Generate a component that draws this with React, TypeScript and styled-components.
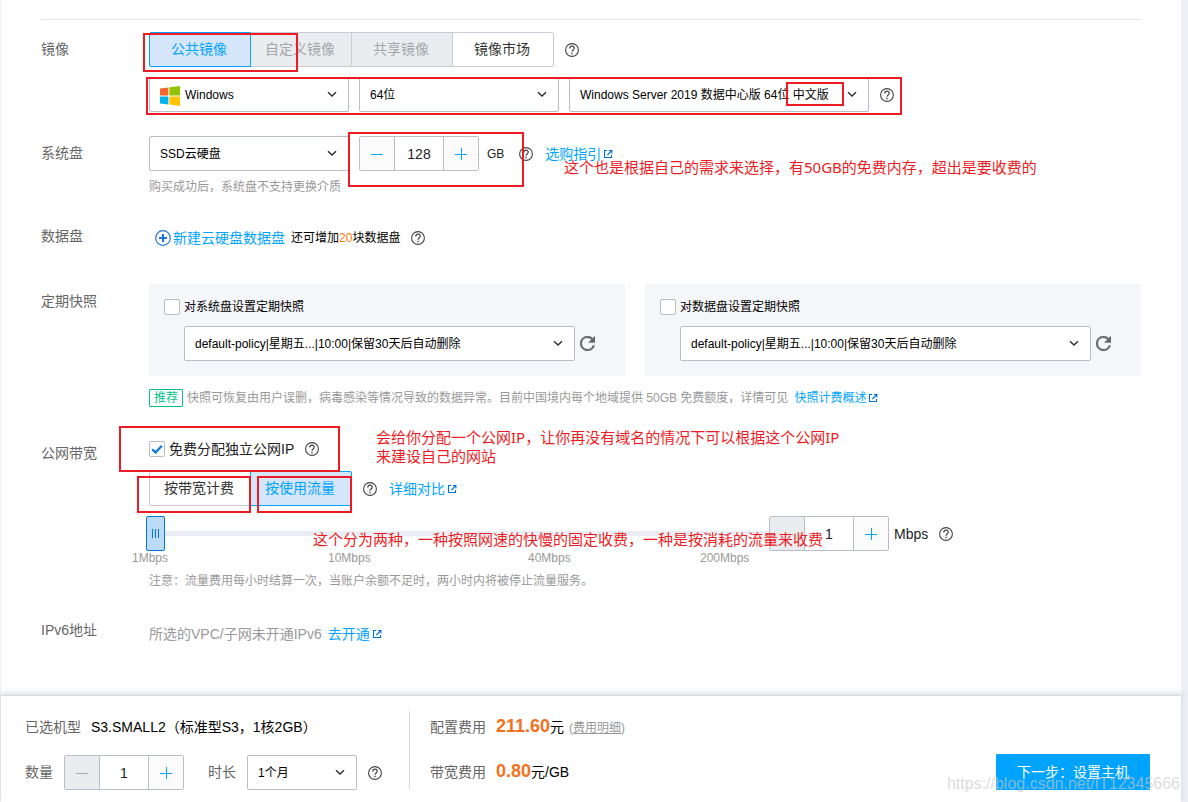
import React, { useId, useState } from "react";
import styled, { createGlobalStyle, css } from "styled-components";

const BLUE = "#00a4ff";
const BORDER = "#b9bdc8";
const DISABLED = "#eaedf0";
const RED = "#ed1c24";

const GlobalStyle = createGlobalStyle`
  * { box-sizing: border-box; }
  body {
    margin: 0;
    background: #eff0f6;
    color: #000;
    font: 14px/20px "Liberation Sans", "Noto Sans CJK SC", sans-serif;
  }
  button, input, select { font-family: inherit; margin: 0; }
  svg { display: block; flex: none; }
`;

/* ---------- page ---------- */

const Page = styled.div`
  position: relative;
  min-height: 100vh;
  padding: 0 7px 0 1px;
  display: flex;
  flex-direction: column;
  overflow: hidden;
`;

const Main = styled.main`
  flex: 1;
  padding: 19px 40px 40px;
  background: #fff;
`;

const Rule = styled.hr`
  margin: 0 0 12px;
  border: 0;
  border-top: 1px solid #e5e5e5;
`;

const Row = styled.section<{ $gap?: number }>`
  display: grid;
  grid-template-columns: 108px 1fr;
  margin-top: ${(p) => p.$gap ?? 24}px;
`;

const RowLabel = styled.h2`
  margin: 0;
  font-size: 14px;
  font-weight: 400;
  line-height: 35px;
  color: #666;
`;

const Line = styled.div<{ $top?: number; $height?: number }>`
  display: flex;
  align-items: center;
  margin-top: ${(p) => p.$top ?? 0}px;
  height: ${(p) => p.$height ?? 35}px;
  white-space: nowrap;
`;

const Hint = styled.p`
  margin: 8px 0 0;
  font-size: 12px;
  line-height: 16px;
  color: #999;
`;

const Small = styled.span<{ $gap?: number }>`
  margin-left: ${(p) => p.$gap ?? 0}px;
  font-size: 12px;
`;

const Muted = styled.span`
  color: #999;
`;

const Orange = styled.span`
  color: #ff7800;
`;

/* ---------- controls ---------- */

const Tabs = styled.div`
  display: flex;
`;

const Tab = styled.button<{ $active?: boolean }>`
  width: 102px;
  height: 35px;
  padding: 0 2px 3px 0;
  border: 1px solid ${(p) => (p.$active ? BLUE : "#c8ccd6")};
  background: ${(p) => (p.$active ? "#d5e6fa" : "#fff")};
  color: ${(p) => (p.$active ? BLUE : "#333")};
  font-size: 14px;
  position: relative;
  z-index: ${(p) => (p.$active ? 1 : 0)};
  & + & { margin-left: -1px; }
  &:first-child { border-radius: 2px 0 0 2px; }
  &:last-child { border-radius: 0 2px 2px 0; }
  &:disabled {
    background: ${DISABLED};
    color: #a3a5a8;
  }
`;

const SelectWrap = styled.div<{ $width?: number; $icon?: boolean }>`
  position: relative;
  ${(p) => (p.$width ? css`width: ${p.$width}px;` : css`flex: 1;`)}
  & + & { margin-left: 10px; }
  select {
    appearance: none;
    width: 100%;
    height: 35px;
    padding: 0 28px 0 ${(p) => (p.$icon ? 35 : 10)}px;
    border: 1px solid ${BORDER};
    border-radius: 2px;
    background: #fff;
    color: #000;
    font-size: 12px;
    display: block;
  }
`;

const Chevron = styled.svg`
  position: absolute;
  right: 11px;
  top: 11px;
  pointer-events: none;
`;

const SelectIcon = styled.span`
  position: absolute;
  left: 11px;
  top: 9px;
  pointer-events: none;
`;

const StepperBox = styled.div<{ $left?: number }>`
  display: flex;
  width: 120px;
  height: 35px;
  margin-left: ${(p) => p.$left ?? 0}px;
  border: 1px solid ${BORDER};
  border-radius: 2px;
  background: #fff;
  input {
    flex: 1;
    min-width: 0;
    border: solid ${BORDER};
    border-width: 0 1px;
    padding: 0;
    background: #fff;
    color: #222;
    font-size: 14px;
    text-align: center;
  }
`;

const StepButton = styled.button`
  width: 34px;
  padding: 0;
  border: 0;
  background: #fbfbfc;
  color: ${BLUE};
  display: grid;
  place-items: center;
  &:disabled {
    background: ${DISABLED};
    color: #aaa;
  }
`;

const Unit = styled.span<{ $size: number; $gap: number }>`
  margin-left: ${(p) => p.$gap}px;
  font-size: ${(p) => p.$size}px;
  color: #222;
`;

const HelpButton = styled.button<{ $gap?: number }>`
  margin: 0 0 0 ${(p) => p.$gap ?? 11}px;
  padding: 0;
  border: 0;
  background: none;
  color: #444;
`;

const IconButton = styled(HelpButton)`
  margin-left: 5px;
  color: #666;
`;

const Link = styled.a<{ $gap?: number; $small?: boolean }>`
  display: inline-flex;
  align-items: center;
  gap: 2px;
  margin-left: ${(p) => p.$gap ?? 12}px;
  color: ${BLUE};
  font-size: ${(p) => (p.$small ? 12 : 14)}px;
  text-decoration: none;
`;

const CheckLabel = styled.label<{ $small?: boolean }>`
  display: flex;
  align-items: center;
  gap: 4px;
  font-size: ${(p) => (p.$small ? 12 : 14)}px;
  color: ${(p) => (p.$small ? "#000" : "#222")};
`;

const CheckBox = styled.span`
  position: relative;
  width: 16px;
  height: 16px;
  input {
    appearance: none;
    display: block;
    width: 16px;
    height: 16px;
    border: 1px solid #b9bdc8;
    border-radius: 2px;
    background: #fff;
  }
  svg {
    position: absolute;
    inset: 0;
    pointer-events: none;
  }
`;

/* ---------- snapshot cards ---------- */

const Cards = styled.div`
  display: grid;
  grid-template-columns: calc(50% - 20px) 1fr;
  gap: 20px;
`;

const Card = styled.div`
  padding: 14px 30px 15px 15px;
  background: #f5f6fa;
`;

const CardSelect = styled.div`
  display: flex;
  align-items: center;
  margin-top: 10px;
  padding-left: 20px;
`;

const Badge = styled.span`
  margin-right: 4px;
  padding: 0 4px;
  border: 1px solid #0abf8e;
  border-radius: 1px;
  color: #0abf8e;
  font-size: 12px;
  line-height: 16px;
`;

/* ---------- slider ---------- */

const Range = styled.input`
  appearance: none;
  width: 623px;
  height: 35px;
  margin-left: -3px;
  background: linear-gradient(#ebedf5, #ebedf5) 0 15px / 100% 5px no-repeat;
  &::-webkit-slider-thumb {
    appearance: none;
    width: 19px;
    height: 35px;
    border: 1px solid #0078e0;
    border-radius: 2px;
    background:
      linear-gradient(#0078e0, #0078e0) 5px 12px / 1px 9px no-repeat,
      linear-gradient(#0078e0, #0078e0) 8px 12px / 1px 9px no-repeat,
      linear-gradient(#0078e0, #0078e0) 11px 12px / 1px 9px no-repeat,
      #badaf6;
  }
`;

const Ticks = styled.div`
  display: grid;
  grid-template-columns: 196px 200px 172px auto;
  margin-left: -17px;
  color: #999;
  font-size: 12px;
  line-height: 14px;
`;

/* ---------- footer ---------- */

const Footer = styled.footer`
  display: flex;
  padding: 15px 31px 12px 24px;
  border-top: 1px solid #d5dde3;
  background: #fff;
  box-shadow: 0 -2px 6px rgba(120, 140, 170, 0.3);
`;

const Summary = styled.div<{ $divided?: boolean }>`
  display: grid;
  grid-template-rows: 33px 35px;
  gap: 11px;
  ${(p) =>
    p.$divided
      ? css`
          padding-left: 20px;
          border-left: 1px solid #ddd;
        `
      : css`
          width: 384px;
        `}
`;

const FootLabel = styled.span<{ $after?: number; $before?: number }>`
  margin-left: ${(p) => p.$before ?? 0}px;
  margin-right: ${(p) => p.$after ?? 10}px;
  padding-bottom: 2px;
  color: #666;
`;

const Cost = styled.span`
  padding-bottom: 2px;
`;

const Price = styled.strong`
  color: #f5701d;
  font-size: 18px;
`;

const Detail = styled.span`
  margin-left: 5px;
  font-size: 12px;
  color: #999;
  a { color: inherit; }
`;

const Submit = styled.button`
  align-self: flex-end;
  width: 154px;
  height: 36px;
  margin-left: auto;
  padding: 0 0 3px;
  border: 0;
  border-radius: 1px;
  background: ${BLUE};
  color: #fff;
  font-size: 14px;
`;

/* ---------- annotations over the page ---------- */

const Mark = styled.div<{ $x: number; $y: number; $w: number; $h: number }>`
  position: absolute;
  z-index: 2;
  left: ${(p) => p.$x}px;
  top: ${(p) => p.$y}px;
  width: ${(p) => p.$w}px;
  height: ${(p) => p.$h}px;
  border: 2px solid ${RED};
  pointer-events: none;
`;

const Note = styled.p<{ $x: number; $y: number }>`
  position: absolute;
  z-index: 2;
  left: ${(p) => p.$x}px;
  top: ${(p) => p.$y}px;
  margin: 0;
  color: ${RED};
  font: 15px/19px "Noto Sans", "Noto Sans CJK SC", sans-serif;
  white-space: nowrap;
  pointer-events: none;
`;

const Watermark = styled.span`
  position: absolute;
  z-index: 3;
  right: 8px;
  bottom: 8px;
  font-size: 16px;
  color: rgba(200, 200, 200, 0.65);
  pointer-events: none;
`;

/* ---------- icons ---------- */

const Help = ({ gap }: { gap?: number }) => (
  <HelpButton aria-label="帮助" $gap={gap}>
    <svg width="14" height="14" viewBox="0 0 14 14" fill="none" stroke="currentColor">
      <circle cx="7" cy="7" r="6.4" strokeWidth="1.1" />
      <path d="M4.8 5.4C4.8 4 5.7 3.2 7 3.2s2.2.8 2.2 2c0 1.7-2.2 1.8-2.2 3.6" strokeWidth="1.2" />
      <path d="M7 9.8v1.4" strokeWidth="1.3" />
    </svg>
  </HelpButton>
);

const External = () => (
  <svg width="10" height="10" viewBox="0 0 10 10" fill="none" stroke="#0071d8" strokeWidth="1.1">
    <path d="M4 1.5H1.5v7h7V6M6 1.5h2.9v2.9M8.7 1.6 4.4 6" />
  </svg>
);

const Refresh = () => (
  <IconButton aria-label="刷新">
    <svg width="15" height="15" viewBox="4 4 16 16" fill="currentColor" stroke="currentColor" strokeWidth="0.4">
      <path d="M17.65 6.35A7.96 7.96 0 0 0 12 4a8 8 0 1 0 7.73 10h-2.08A6 6 0 1 1 12 6c1.66 0 3.14.69 4.22 1.78L13 11h7V4z" />
    </svg>
  </IconButton>
);

const CirclePlus = () => (
  <svg width="16" height="16" viewBox="0 0 16 16" fill="none" stroke="#1a73d9">
    <circle cx="8" cy="8" r="7.3" strokeWidth="1.2" />
    <path d="M4 8h8M8 4v8" strokeWidth="2" />
  </svg>
);

const WindowsLogo = () => (
  <svg width="20" height="20" viewBox="0 0 20 20">
    <path fill="#f8682c" d="M0 2.6 8.4 1.4v8H0z" />
    <path fill="#91c300" d="M9.4 1.2 20 0v9.4H9.4z" />
    <path fill="#00b4f1" d="M0 10.4h8.4v8L0 17.4z" />
    <path fill="#ffc300" d="M9.4 10.4H20V20L9.4 18.6z" />
  </svg>
);

const Minus = () => (
  <svg width="12" height="12" viewBox="0 0 12 12" stroke="currentColor">
    <path d="M0 6.5h12" />
  </svg>
);

const Plus = () => (
  <svg width="12" height="12" viewBox="0 0 12 12" stroke="currentColor">
    <path d="M0 6.5h12M6.5 0v12" />
  </svg>
);

/* ---------- composed controls ---------- */

function Select({ label, value, width, icon }: { label: string; value: string; width?: number; icon?: React.ReactNode }) {
  return (
    <SelectWrap $width={width} $icon={!!icon}>
      <select aria-label={label} defaultValue={value}>
        <option>{value}</option>
      </select>
      {icon && <SelectIcon>{icon}</SelectIcon>}
      <Chevron width="12" height="12" viewBox="0 0 12 12" fill="none" stroke="#333" strokeWidth="1.5">
        <path d="M2 4.2 6 8l4-3.8" />
      </Chevron>
    </SelectWrap>
  );
}

function Stepper({ label, start, min, left }: { label: string; start: number; min: number; left?: number }) {
  const [value, setValue] = useState(start);
  return (
    <StepperBox $left={left}>
      <StepButton aria-label="减少" disabled={value <= min} onClick={() => setValue(value - 1)}>
        <Minus />
      </StepButton>
      <input aria-label={label} value={value} onChange={(e) => setValue(Number(e.target.value) || min)} />
      <StepButton aria-label="增加" onClick={() => setValue(value + 1)}>
        <Plus />
      </StepButton>
    </StepperBox>
  );
}

function Check({ text, small, initial = false }: { text: string; small?: boolean; initial?: boolean }) {
  const id = useId();
  const [on, setOn] = useState(initial);
  return (
    <CheckLabel htmlFor={id} $small={small}>
      <CheckBox>
        <input id={id} type="checkbox" checked={on} onChange={() => setOn(!on)} />
        {on && (
          <svg width="16" height="16" viewBox="0 0 16 16" fill="none" stroke="#0078e0" strokeWidth="2.2">
            <path d="M3.2 8.2 6.6 11.4 12.8 4.8" />
          </svg>
        )}
      </CheckBox>
      {text}
    </CheckLabel>
  );
}

function SnapshotCard({ title }: { title: string }) {
  return (
    <Card>
      <Line $height={18}>
        <Check small text={title} />
      </Line>
      <CardSelect>
        <Select label={title} value="default-policy|星期五...|10:00|保留30天后自动删除" />
        <Refresh />
      </CardSelect>
    </Card>
  );
}

const marks = [
  [143, 33, 155, 39],
  [146, 77, 756, 38],
  [786, 82, 58, 24],
  [348, 132, 176, 55],
  [119, 426, 221, 46],
  [137, 476, 114, 37],
  [257, 476, 95, 37],
];

export default function App() {
  return (
    <Page>
      <GlobalStyle />
      <Main>
        <Rule />
        <Row $gap={0}>
          <RowLabel>镜像</RowLabel>
          <div>
            <Line>
              <Tabs>
                <Tab $active>公共镜像</Tab>
                <Tab disabled>自定义镜像</Tab>
                <Tab disabled>共享镜像</Tab>
                <Tab>镜像市场</Tab>
              </Tabs>
              <Help />
            </Line>
            <Line $top={10}>
              <Select label="操作系统" value="Windows" width={200} icon={<WindowsLogo />} />
              <Select label="位数" value="64位" width={200} />
              <Select label="镜像版本" value="Windows Server 2019 数据中心版 64位 中文版" width={300} />
              <Help />
            </Line>
          </div>
        </Row>

        <Row>
          <RowLabel>系统盘</RowLabel>
          <div>
            <Line>
              <Select label="系统盘类型" value="SSD云硬盘" width={200} />
              <Stepper label="系统盘容量" start={128} min={50} left={10} />
              <Unit $size={12} $gap={8}>GB</Unit>
              <Help gap={15} />
              <Link href="#guide">选购指引<External /></Link>
            </Line>
            <Hint>购买成功后，系统盘不支持更换介质</Hint>
          </div>
        </Row>

        <Row>
          <RowLabel>数据盘</RowLabel>
          <Line $height={38}>
            <Link href="#add-disk" $gap={6}><CirclePlus />新建云硬盘数据盘</Link>
            <Small $gap={6}>还可增加<Orange>20</Orange>块数据盘</Small>
            <Help />
          </Line>
        </Row>

        <Row $gap={27}>
          <RowLabel>定期快照</RowLabel>
          <div>
            <Cards>
              <SnapshotCard title="对系统盘设置定期快照" />
              <SnapshotCard title="对数据盘设置定期快照" />
            </Cards>
            <Line $top={13} $height={18}>
              <Badge>推荐</Badge>
              <Small>
                <Muted>快照可恢复由用户误删，病毒感染等情况导致的数据异常。目前中国境内每个地域提供 50GB 免费额度，详情可见</Muted>
              </Small>
              <Link href="#snapshot-price" $small $gap={6}>快照计费概述<External /></Link>
            </Line>
          </div>
        </Row>

        <Row $gap={29}>
          <RowLabel>公网带宽</RowLabel>
          <div>
            <Line $height={26}>
              <Check initial text="免费分配独立公网IP" />
              <Help />
            </Line>
            <Line $top={9}>
              <Tabs>
                <Tab>按带宽计费</Tab>
                <Tab $active>按使用流量</Tab>
              </Tabs>
              <Help />
              <Link href="#compare">详细对比<External /></Link>
            </Line>
            <Line $top={10}>
              <Range type="range" aria-label="带宽" min={1} max={200} defaultValue={1} />
              <Stepper label="带宽上限" start={1} min={1} />
              <Unit $size={14} $gap={5}>Mbps</Unit>
              <Help />
            </Line>
            <Ticks>
              <span>1Mbps</span>
              <span>10Mbps</span>
              <span>40Mbps</span>
              <span>200Mbps</span>
            </Ticks>
            <Hint>注意：流量费用每小时结算一次，当账户余额不足时，两小时内将被停止流量服务。</Hint>
          </div>
        </Row>

        <Row>
          <RowLabel>IPv6地址</RowLabel>
          <Line $height={42}>
            <Muted>所选的VPC/子网未开通IPv6</Muted>
            <Link href="#ipv6" $gap={6}>去开通<External /></Link>
          </Line>
        </Row>
      </Main>

      <Footer>
        <Summary>
          <Line $height={33}>
            <FootLabel>已选机型</FootLabel>
            <Cost>S3.SMALL2（标准型S3，1核2GB）</Cost>
          </Line>
          <Line>
            <FootLabel $after={11}>数量</FootLabel>
            <Stepper label="数量" start={1} min={1} />
            <FootLabel $before={24} $after={11}>时长</FootLabel>
            <Select label="时长" value="1个月" width={110} />
            <Help />
          </Line>
        </Summary>
        <Summary $divided>
          <Line $height={33}>
            <FootLabel>配置费用</FootLabel>
            <Cost>
              <Price>211.60</Price>元
              <Detail>(<a href="#detail">费用明细</a>)</Detail>
            </Cost>
          </Line>
          <Line>
            <FootLabel>带宽费用</FootLabel>
            <Cost>
              <Price>0.80</Price>元/GB
            </Cost>
          </Line>
        </Summary>
        <Submit>下一步：设置主机</Submit>
      </Footer>

      {marks.map(([x, y, w, h]) => (
        <Mark key={`${x}-${y}`} $x={x} $y={y} $w={w} $h={h} />
      ))}
      <Note $x={564} $y={158}>这个也是根据自己的需求来选择，有50GB的免费内存，超出是要收费的</Note>
      <Note $x={376} $y={428}>
        会给你分配一个公网IP，让你再没有域名的情况下可以根据这个公网IP
        <br />
        来建设自己的网站
      </Note>
      <Note $x={313} $y={530}>这个分为两种，一种按照网速的快慢的固定收费，一种是按消耗的流量来收费</Note>
      <Watermark>https://blog.csdn.net/IT12345666</Watermark>
    </Page>
  );
}
